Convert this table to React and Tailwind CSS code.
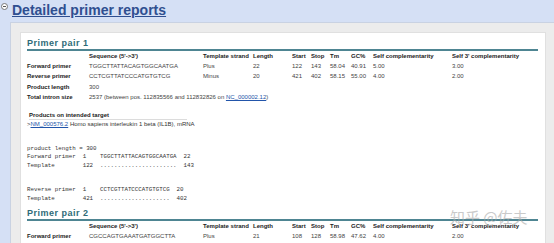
import React from 'react';

const cols = 'grid grid-cols-[62px_114px_50px_39px_19px_19px_21px_22px_79px_1fr]';

const pairs = [
  {
    n: 1,
    fwd: ['TGGCTTATTACAGTGGCAATGA', 'Plus', '22', '122', '143', '58.04', '40.91', '5.00', '3.00'],
    rev: ['CCTCGTTATCCCATGTGTCG', 'Minus', '20', '421', '402', '58.15', '55.00', '4.00', '2.00'],
  },
  {
    n: 2,
    fwd: ['CGCCAGTGAAATGATGGCTTA', 'Plus', '21', '108', '128', '58.98', '47.62', '4.00', '2.00'],
    rev: ['TGGTGGTCCCAGATTCCTAG', 'Minus', '20', '251', '232', '58.82', '55.00', '3.00', '0.00'],
  },
];

const head = ['Sequence (5\'->3\')', 'Template strand', 'Length', 'Start', 'Stop', 'Tm', 'GC%', 'Self complementarity', 'Self 3\' complementarity'];

const Row = ({ label, cells, bold }) => (
  <div className={`${cols} h-[10px] leading-[10px] whitespace-nowrap`}>
    <div className="font-bold text-[#222]">{label}</div>
    {cells.map((c, i) => (
      <div key={i} className={bold ? 'font-bold text-[#222]' : 'text-[#444]'}>{c}</div>
    ))}
  </div>
);

const PairHeading = ({ n }) => (
  <div className="h-[11px] leading-[11px] text-[9px] font-bold tracking-[0.5px] text-[#2e6b78] border-b-2 border-[#4e8592] pb-[12px] box-content -mb-[1px]">
    <span className="relative -top-[1px]">Primer pair {n}</span>
  </div>
);

const PairTable = ({ p }) => (
  <div className="text-[6px]">
    <Row label="" cells={head} bold />
    <Row label="Forward primer" cells={p.fwd} />
    <Row label="Reverse primer" cells={p.rev} />
  </div>
);

export default function App() {
  const p1 = pairs[0];
  return (
    <div className="w-[554px] h-[243px] overflow-hidden bg-[#d5e0f5] relative" style={{ fontFamily: '"Liberation Sans", Arial, sans-serif' }}>
      <div className="h-[22px] flex items-start">
        <div className="w-[7px] h-[7px] mt-[3px] ml-[1px] rounded-full border border-[#777] bg-white flex items-center justify-center">
          <div className="w-[3px] h-[1px] bg-[#555]" />
        </div>
        <a className="ml-[4px] mt-[1px] text-[14px] leading-[18px] font-bold text-[#2f4f90] underline underline-offset-[1px]">Detailed primer reports</a>
      </div>
      <div className="ml-[10px] bg-[#ececec] border-l border-t border-[#c9d2e2] h-[221px] pl-[9px] pt-[9px] pr-[8px]">
        <div className="bg-white border border-[#e0e0e0] h-[230px] pl-[6px] pr-[7px] pt-[5px]">
          <div className="h-[11px] leading-[11px] text-[9px] font-bold tracking-[0.5px] text-[#2e6b78]">Primer pair 1</div>
          <div className="h-[2px] bg-[#4e8592]" />
          <div className="text-[6px]">
            <Row label="" cells={head} bold />
            <Row label="Forward primer" cells={p1.fwd} />
            <Row label="Reverse primer" cells={p1.rev} />
            <div className="flex h-[11px] leading-[12px] whitespace-nowrap">
              <div className="w-[62px] font-bold text-[#222]">Product length</div>
              <div className="text-[#444]">300</div>
            </div>
            <div className="flex h-[10px] leading-[10px] whitespace-nowrap">
              <div className="w-[62px] font-bold text-[#222]">Total intron size</div>
              <div className="text-[#444]">
                2537 (between pos. 112835566 and 112832826 on <a className="text-[#2255aa] underline">NC_000002.12</a>)
              </div>
            </div>
            <div className="mt-[9px] w-[158px] ml-[2px] h-[8px] leading-[8px] font-bold text-[#222] border-b border-[#dcdcdc] box-content">Products on intended target</div>
            <div className="h-[8px] leading-[8px] text-[#333]">
              &gt;<a className="text-[#2255aa] underline">NM_000576.2</a> Homo sapiens interleukin 1 beta (IL1B), mRNA
            </div>
          </div>
          <pre className="mt-[17px] text-[5.8px] leading-[8.3px] text-[#333]" style={{ fontFamily: '"Liberation Mono", "Courier New", monospace' }}>
{`product length = 300
Forward primer  1    TGGCTTATTACAGTGGCAATGA  22
Template        122  ......................  143


Reverse primer  1    CCTCGTTATCCCATGTGTCG  20
Template        421  ....................  402`}
          </pre>
          <div className="mt-[5px] h-[11px] leading-[11px] text-[9px] font-bold tracking-[0.5px] text-[#2e6b78]">Primer pair 2</div>
          <div className="h-[2px] bg-[#4e8592]" />
          <PairTable p={pairs[1]} />
        </div>
      </div>
      <div className="absolute left-[450px] top-[208px] text-[15px] leading-[18px] text-[#a8a8a8] opacity-60 whitespace-nowrap" style={{ fontFamily: '"Noto Sans CJK SC", sans-serif' }}>
        知乎 @佐夫
      </div>
    </div>
  );
}
